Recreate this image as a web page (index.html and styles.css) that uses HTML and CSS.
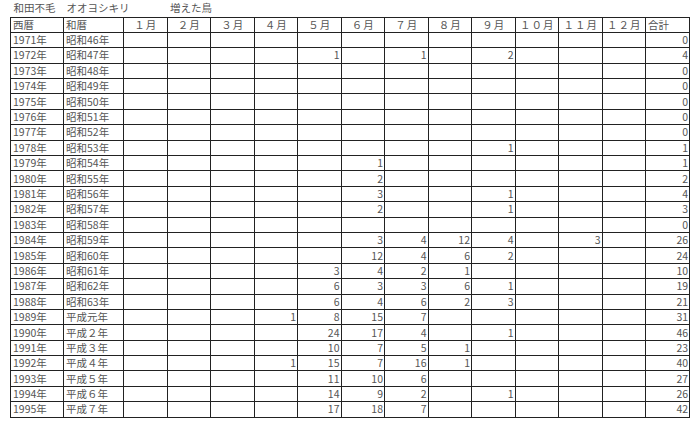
FILE: index.html
```html
<!DOCTYPE html>
<html lang="ja">
<head>
<meta charset="utf-8">
<title>和田不毛 オオヨシキリ</title>
<link rel="stylesheet" href="styles.css">
</head>
<body>
<table class="sheet">
<colgroup>
<col class="c-year"><col class="c-era">
<col class="c-m"><col class="c-m"><col class="c-m"><col class="c-m"><col class="c-m"><col class="c-m">
<col class="c-m"><col class="c-m"><col class="c-m"><col class="c-m"><col class="c-m"><col class="c-m">
<col class="c-total">
</colgroup>
<tr class="title"><td>和田不毛</td><td colspan="2">オオヨシキリ</td><td colspan="3">増えた鳥</td><td colspan="9"></td></tr>
<tr class="head"><td>西暦</td><td>和暦</td><td class="m">１月</td><td class="m">２月</td><td class="m">３月</td><td class="m">４月</td><td class="m">５月</td><td class="m">６月</td><td class="m">７月</td><td class="m">８月</td><td class="m">９月</td><td class="m">１０月</td><td class="m">１１月</td><td class="m">１２月</td><td>合計</td></tr>
<tr><td>1971年</td><td>昭和46年</td><td></td><td></td><td></td><td></td><td></td><td></td><td></td><td></td><td></td><td></td><td></td><td></td><td class="n">0</td></tr>
<tr><td>1972年</td><td>昭和47年</td><td></td><td></td><td></td><td></td><td class="n">1</td><td></td><td class="n">1</td><td></td><td class="n">2</td><td></td><td></td><td></td><td class="n">4</td></tr>
<tr><td>1973年</td><td>昭和48年</td><td></td><td></td><td></td><td></td><td></td><td></td><td></td><td></td><td></td><td></td><td></td><td></td><td class="n">0</td></tr>
<tr><td>1974年</td><td>昭和49年</td><td></td><td></td><td></td><td></td><td></td><td></td><td></td><td></td><td></td><td></td><td></td><td></td><td class="n">0</td></tr>
<tr><td>1975年</td><td>昭和50年</td><td></td><td></td><td></td><td></td><td></td><td></td><td></td><td></td><td></td><td></td><td></td><td></td><td class="n">0</td></tr>
<tr><td>1976年</td><td>昭和51年</td><td></td><td></td><td></td><td></td><td></td><td></td><td></td><td></td><td></td><td></td><td></td><td></td><td class="n">0</td></tr>
<tr><td>1977年</td><td>昭和52年</td><td></td><td></td><td></td><td></td><td></td><td></td><td></td><td></td><td></td><td></td><td></td><td></td><td class="n">0</td></tr>
<tr><td>1978年</td><td>昭和53年</td><td></td><td></td><td></td><td></td><td></td><td></td><td></td><td></td><td class="n">1</td><td></td><td></td><td></td><td class="n">1</td></tr>
<tr><td>1979年</td><td>昭和54年</td><td></td><td></td><td></td><td></td><td></td><td class="n">1</td><td></td><td></td><td></td><td></td><td></td><td></td><td class="n">1</td></tr>
<tr><td>1980年</td><td>昭和55年</td><td></td><td></td><td></td><td></td><td></td><td class="n">2</td><td></td><td></td><td></td><td></td><td></td><td></td><td class="n">2</td></tr>
<tr><td>1981年</td><td>昭和56年</td><td></td><td></td><td></td><td></td><td></td><td class="n">3</td><td></td><td></td><td class="n">1</td><td></td><td></td><td></td><td class="n">4</td></tr>
<tr><td>1982年</td><td>昭和57年</td><td></td><td></td><td></td><td></td><td></td><td class="n">2</td><td></td><td></td><td class="n">1</td><td></td><td></td><td></td><td class="n">3</td></tr>
<tr><td>1983年</td><td>昭和58年</td><td></td><td></td><td></td><td></td><td></td><td></td><td></td><td></td><td></td><td></td><td></td><td></td><td class="n">0</td></tr>
<tr><td>1984年</td><td>昭和59年</td><td></td><td></td><td></td><td></td><td></td><td class="n">3</td><td class="n">4</td><td class="n">12</td><td class="n">4</td><td></td><td class="n">3</td><td></td><td class="n">26</td></tr>
<tr><td>1985年</td><td>昭和60年</td><td></td><td></td><td></td><td></td><td></td><td class="n">12</td><td class="n">4</td><td class="n">6</td><td class="n">2</td><td></td><td></td><td></td><td class="n">24</td></tr>
<tr><td>1986年</td><td>昭和61年</td><td></td><td></td><td></td><td></td><td class="n">3</td><td class="n">4</td><td class="n">2</td><td class="n">1</td><td></td><td></td><td></td><td></td><td class="n">10</td></tr>
<tr><td>1987年</td><td>昭和62年</td><td></td><td></td><td></td><td></td><td class="n">6</td><td class="n">3</td><td class="n">3</td><td class="n">6</td><td class="n">1</td><td></td><td></td><td></td><td class="n">19</td></tr>
<tr><td>1988年</td><td>昭和63年</td><td></td><td></td><td></td><td></td><td class="n">6</td><td class="n">4</td><td class="n">6</td><td class="n">2</td><td class="n">3</td><td></td><td></td><td></td><td class="n">21</td></tr>
<tr><td>1989年</td><td>平成元年</td><td></td><td></td><td></td><td class="n">1</td><td class="n">8</td><td class="n">15</td><td class="n">7</td><td></td><td></td><td></td><td></td><td></td><td class="n">31</td></tr>
<tr><td>1990年</td><td>平成２年</td><td></td><td></td><td></td><td></td><td class="n">24</td><td class="n">17</td><td class="n">4</td><td></td><td class="n">1</td><td></td><td></td><td></td><td class="n">46</td></tr>
<tr><td>1991年</td><td>平成３年</td><td></td><td></td><td></td><td></td><td class="n">10</td><td class="n">7</td><td class="n">5</td><td class="n">1</td><td></td><td></td><td></td><td></td><td class="n">23</td></tr>
<tr><td>1992年</td><td>平成４年</td><td></td><td></td><td></td><td class="n">1</td><td class="n">15</td><td class="n">7</td><td class="n">16</td><td class="n">1</td><td></td><td></td><td></td><td></td><td class="n">40</td></tr>
<tr><td>1993年</td><td>平成５年</td><td></td><td></td><td></td><td></td><td class="n">11</td><td class="n">10</td><td class="n">6</td><td></td><td></td><td></td><td></td><td></td><td class="n">27</td></tr>
<tr><td>1994年</td><td>平成６年</td><td></td><td></td><td></td><td></td><td class="n">14</td><td class="n">9</td><td class="n">2</td><td></td><td class="n">1</td><td></td><td></td><td></td><td class="n">26</td></tr>
<tr><td>1995年</td><td>平成７年</td><td></td><td></td><td></td><td></td><td class="n">17</td><td class="n">18</td><td class="n">7</td><td></td><td></td><td></td><td></td><td></td><td class="n">42</td></tr>
</table>
</body>
</html>
```

FILE: styles.css
```css
html, body {
  margin: 0;
  padding: 0;
  background: #ffffff;
}

body {
  padding: 0 0 0 10px;
  font-family: "Noto Sans CJK JP", "Noto Sans", sans-serif;
  font-size: 10.5px;
  color: #555555;
}

.sheet {
  border-collapse: collapse;
  table-layout: fixed;
  width: 679px;
}

.c-year { width: 53px; }
.c-era { width: 60px; }
.c-m { width: 43.5px; }
.c-total { width: 44px; }

.sheet td {
  border: 1px solid #222222;
  height: 14.4px;
  padding: 0 1px 0 2px;
  line-height: 12px;
  white-space: nowrap;
  overflow: hidden;
  vertical-align: middle;
}

.sheet .title td {
  border: none;
  height: 16.5px;
  padding-left: 3px;
}

.sheet td.m {
  text-align: center;
  letter-spacing: 1px;
}

.sheet td.n {
  text-align: right;
}
```
